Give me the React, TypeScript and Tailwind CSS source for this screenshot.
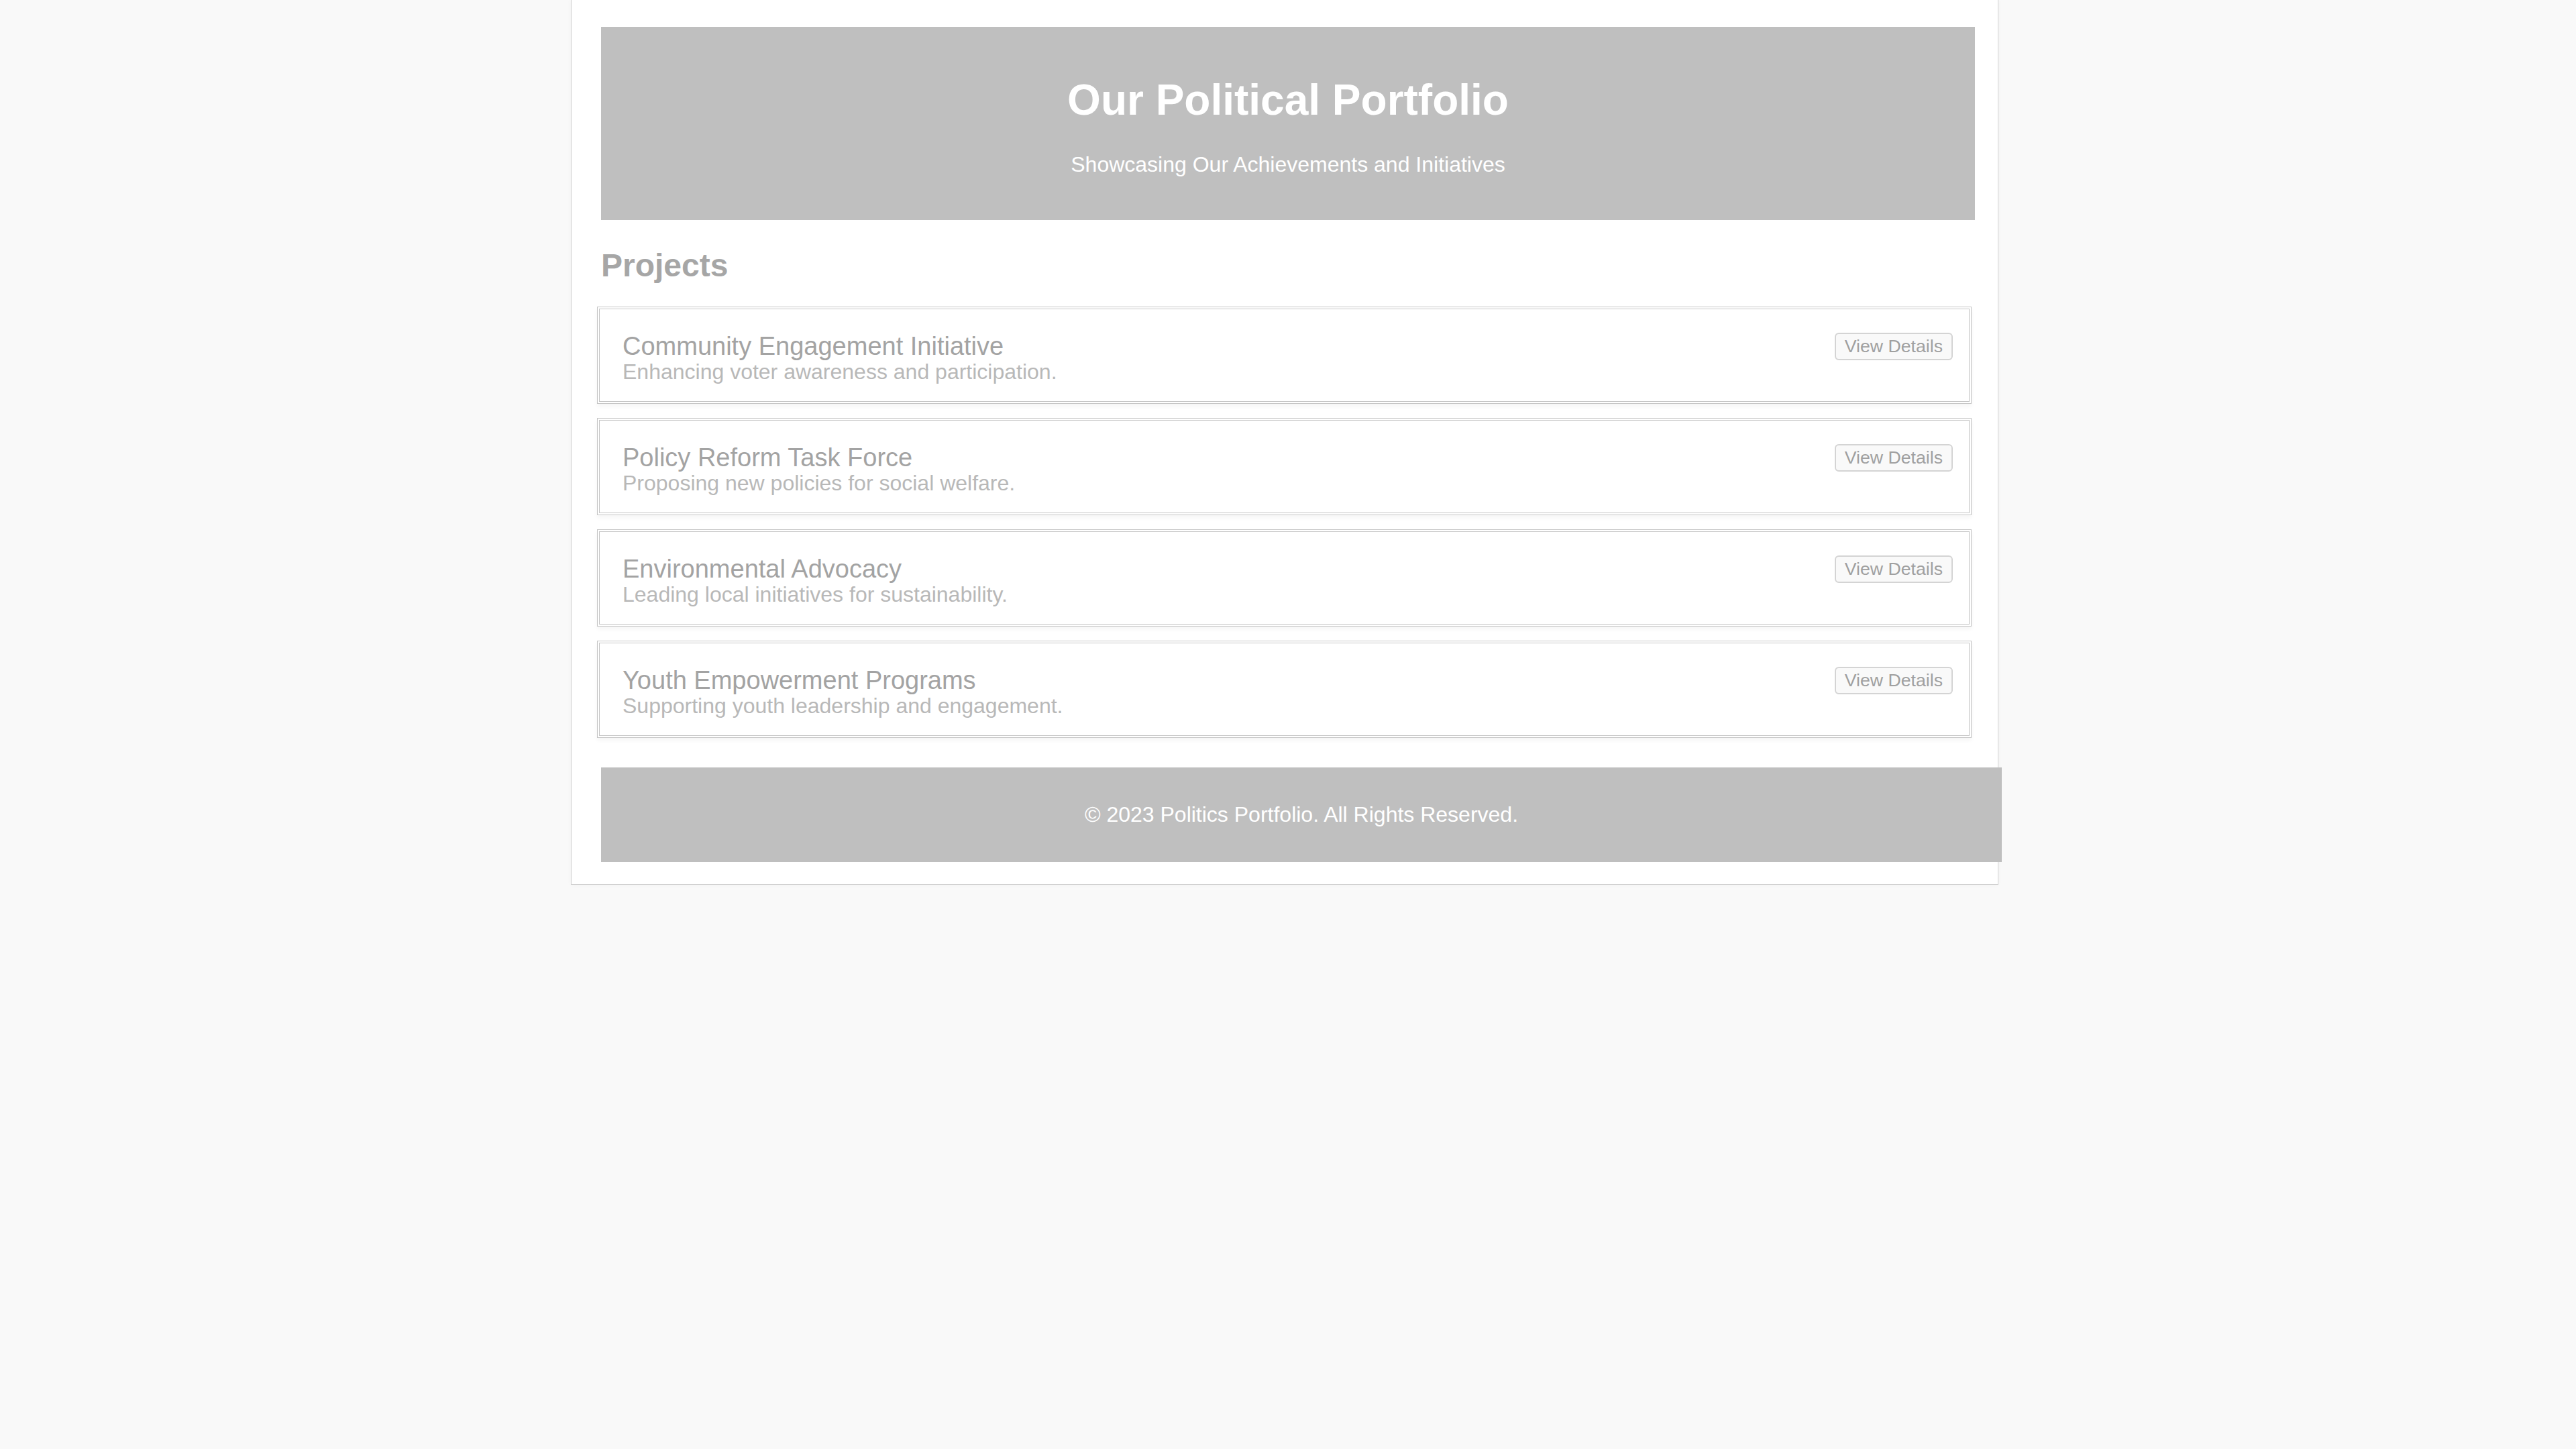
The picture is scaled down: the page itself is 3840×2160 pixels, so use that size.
const projects = [
  { title: 'Community Engagement Initiative', desc: 'Enhancing voter awareness and participation.' },
  { title: 'Policy Reform Task Force', desc: 'Proposing new policies for social welfare.' },
  { title: 'Environmental Advocacy', desc: 'Leading local initiatives for sustainability.' },
  { title: 'Youth Empowerment Programs', desc: 'Supporting youth leadership and engagement.' },
];

const ProjectCard = ({ title, desc }: { title: string; desc: string }) => (
  <div className="-ml-[6px] w-[2049px] h-[145px] flex items-start justify-between border-[4px] border-double border-[#c6c6c6] bg-white pl-[34px] pr-[24px] pt-[35px] shadow-[0_4px_6px_rgba(0,0,0,0.04)]">
    <div className="flex flex-col">
      <h3 className="text-[38px] leading-[40px] text-[#a3a3a3]">{title}</h3>
      <p className="text-[32px] leading-[36px] text-[#b8b8b8]">{desc}</p>
    </div>
    <button className="rounded-[6px] border-2 border-[#d4d4d4] bg-[#f9f9f9] px-[13px] py-[3px] text-[26.67px] leading-[31px] text-[#a0a0a0]">
      View Details
    </button>
  </div>
);

export default function App() {
  return (
    <div className="min-h-screen bg-[#f9f9f9] font-['Liberation_Sans',Arial,sans-serif]">
      <div className="flex justify-center pr-[10px]">
        <div className="w-[2128px] border-x border-b border-[#d2d2d2] bg-white pl-[44px] pr-[34px] pt-[40px] pb-[33px] shadow-[0_0_6px_rgba(0,0,0,0.04)]">
          {/* header */}
          <header className="flex flex-col items-center bg-[#bfbfbf] pt-[72px] pb-[64px] text-white">
            <h1 className="text-[64px] leading-[74px] font-bold">Our Political Portfolio</h1>
            <p className="mt-[41px] text-[32px] leading-[37px]">Showcasing Our Achievements and Initiatives</p>
          </header>

          <h2 className="mt-[40px] mb-[34px] text-[48px] leading-[55px] font-bold text-[#a6a6a6]">Projects</h2>

          <div className="flex flex-col gap-[21px]">
            {projects.map((p) => (
              <ProjectCard key={p.title} title={p.title} desc={p.desc} />
            ))}
          </div>

          {/* footer overflows the container on the right, as in the original */}
          <footer className="mt-[44px] w-[2088px] bg-[#bfbfbf] py-[52px] text-center text-[32px] leading-[37px] text-white">
            © 2023 Politics Portfolio. All Rights Reserved.
          </footer>
        </div>
      </div>
    </div>
  );
}
